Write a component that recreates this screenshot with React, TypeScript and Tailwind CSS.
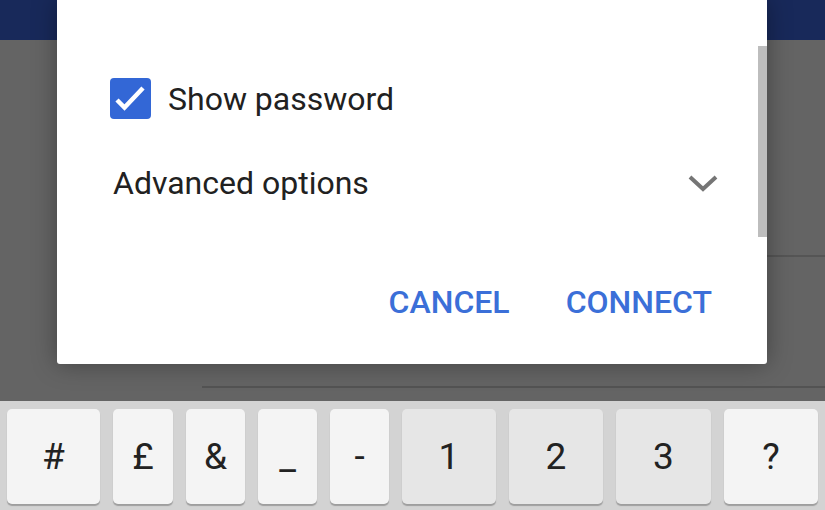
import React from "react";

const keys = [
  { label: "#", w: "w-[93px]", dark: false },
  { label: "£", w: "w-[60px]", dark: false },
  { label: "&", w: "w-[59px]", dark: false },
  { label: "_", w: "w-[59px]", dark: false },
  { label: "-", w: "w-[59px]", dark: false },
  { label: "1", w: "w-[94px]", dark: true },
  { label: "2", w: "w-[94px]", dark: true },
  { label: "3", w: "w-[95px]", dark: true },
  { label: "?", w: "w-[94px]", dark: false },
];

const Key = ({ label, w, dark }: { label: string; w: string; dark: boolean }) => (
  <div
    className={`${w} h-[95px] rounded-[5px] flex items-center justify-center text-[37px] text-[#222] shadow-[0_2px_1px_rgba(0,0,0,0.25)] ${
      dark ? "bg-[#e6e6e6]" : "bg-[#f4f4f4]"
    }`}
  >
    {label}
  </div>
);

const App = () => {
  return (
    <div
      className="relative w-[825px] h-[510px] overflow-hidden flex flex-col"
      style={{ fontFamily: "Roboto, 'Noto Sans', sans-serif" }}
    >
      <div className="h-[40px] bg-[#18295a]" />
      <div className="flex-1 bg-[#646464] flex flex-col">
        <div className="h-[215px]" />
        <div className="ml-auto w-[58px] h-[2px] bg-[#555]" />
        <div className="h-[129px]" />
        <div className="ml-[202px] h-[2px] bg-[#535353]" />
      </div>
      <div className="h-[109px] bg-[#d3d3d3] flex gap-[13px] pl-[7px] pt-[8px]">
        {keys.map((k) => (
          <Key key={k.label} {...k} />
        ))}
      </div>

      {/* dialog */}
      <div className="absolute left-[57px] top-0 w-[710px] h-[364px] bg-white rounded-b-[3px] shadow-[0_0_24px_rgba(0,0,0,0.35)] flex flex-col pl-[53px] pr-[48px] text-[#212121]">
        <div className="absolute right-0 top-[46px] w-[9px] h-[191px] bg-[#bdbdbd]" />
        <div className="mt-[78px] h-[41px] flex items-center gap-[17px]">
          <div className="w-[41px] h-[41px] rounded-[4px] bg-[#3367d6]">
            <svg width="41" height="41" viewBox="0 0 41 41">
              <path d="M7 22l7.5 7.5L33 10" fill="none" stroke="white" strokeWidth="4.5" />
            </svg>
          </div>
          <span className="text-[32px] leading-none">Show password</span>
        </div>
        <div className="mt-[43px] h-[42px] flex items-center justify-between">
          <span className="text-[32px] leading-none ml-[3px]">Advanced options</span>
          <svg width="32" height="20" viewBox="0 0 32 20">
            <path d="M3 4l13 12L29 4" fill="none" stroke="#757575" strokeWidth="4" />
          </svg>
        </div>
        <div className="mt-[82px] flex justify-end gap-[56px] pr-[7px] text-[32px] font-medium text-[#3b6fd8] leading-none">
          <span>CANCEL</span>
          <span>CONNECT</span>
        </div>
      </div>
    </div>
  );
};

export default App;
